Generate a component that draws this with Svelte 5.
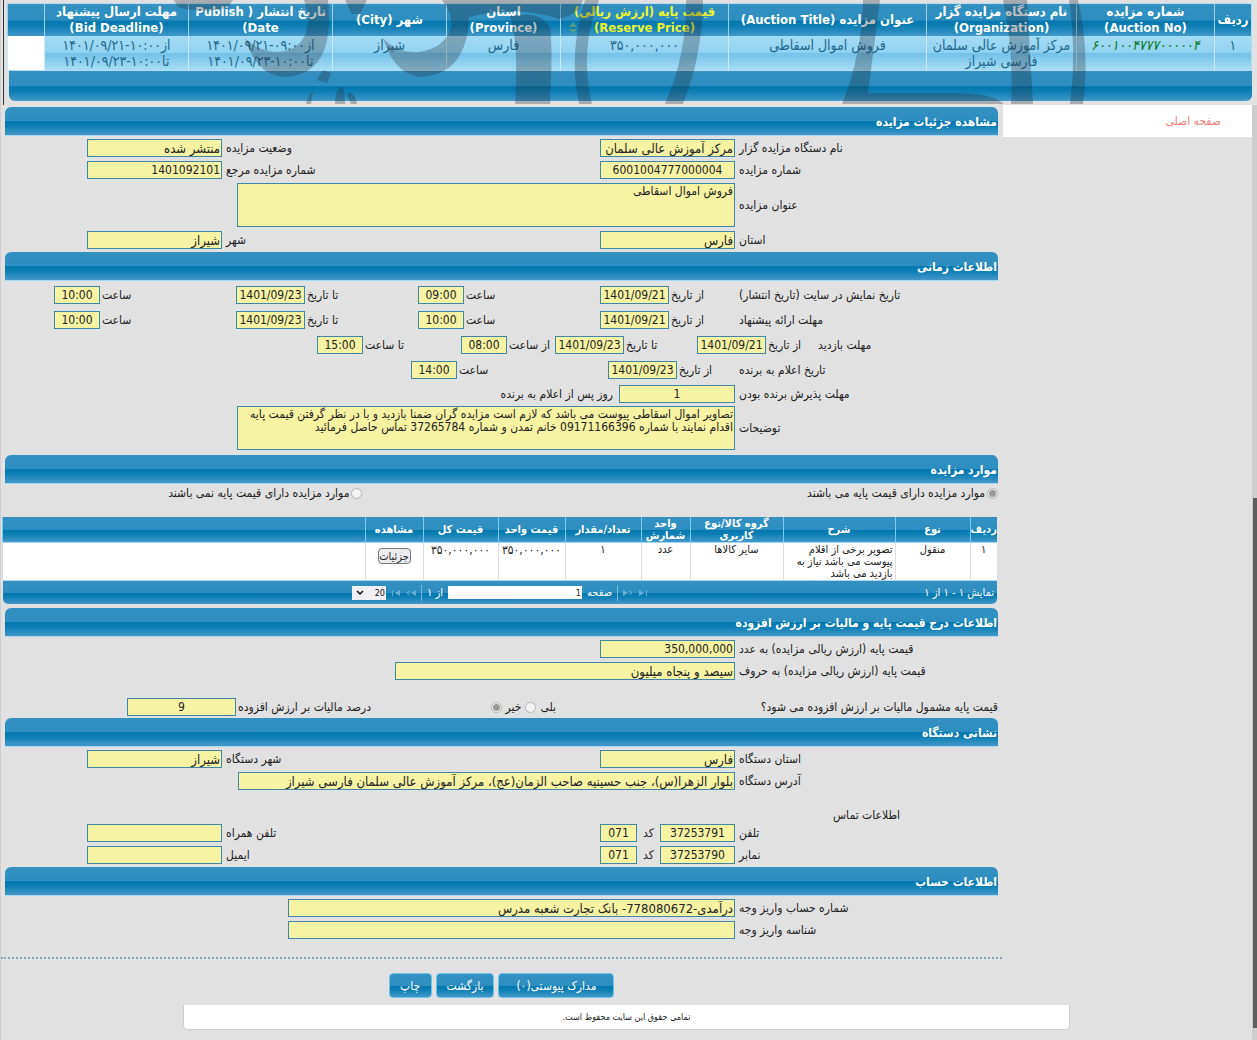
<script>
  const auctionColumns = [
    { lines: ['ردیف'], width: 37 },
    { lines: ['شماره مزایده', '(Auction No)'], width: 138 },
    { lines: ['نام دستگاه مزایده گزار', '(Organization)'], width: 150 },
    { lines: ['عنوان مزایده (Auction Title)'], width: 198 },
    { lines: ['قیمت پایه (ارزش ریالی)', '(Reserve Price)'], width: 168, sorted: true },
    { lines: ['استان', '(Province)'], width: 114 },
    { lines: ['شهر (City)'], width: 114 },
    { lines: ['تاریخ انتشار ( Publish Date)'], width: 144 },
    { lines: ['مهلت ارسال پیشنهاد', '(Bid Deadline)'], width: 144 },
    { lines: [''], width: 37 }
  ];
  const itemColumns = [
    ['ردیف', 27], ['نوع', 75], ['شرح', 112], ['گروه کالا/نوع کاربری', 93], ['واحد شمارش', 49],
    ['تعداد/مقدار', 76], ['قیمت واحد', 67], ['قیمت کل', 75], ['مشاهده', 58], ['', 0]
  ];
  const org = 'مرکز آموزش عالی سلمان فارسی شیراز';
  let title = $state('فروش اموال اسقاطی');
  let notes = $state('تصاویر اموال اسقاطی پیوست می باشد که لازم است مزایده گران ضمنا بازدید و با در نظر گرفتن قیمت پایه اقدام نمایند با شماره 09171166396 خانم تمدن و شماره 37265784 تماس حاصل فرمائید');
</script>

{#snippet field(id, label, value, size = 'mid', kind = '')}
  <label class="cap" for={id}>{label}</label>
  <input {id} class="box {size} {kind}" readonly {value} />
{/snippet}

{#snippet part(id, label, value, size = 'time')}
  <div class="part">
    <label for={id}>{label}</label>
    <input {id} class="box center {size}" readonly {value} />
  </div>
{/snippet}

<div class="page" dir="rtl" lang="fa">
  <header class="top">
    <table class="auction">
      <colgroup>
        {#each auctionColumns as c}<col style="width:{c.width}px" />{/each}
      </colgroup>
      <thead>
        <tr>
          {#each auctionColumns as c}
            <th class:sorted={c.sorted}>
              {#each c.lines as line}<div>{line}</div>{/each}
              {#if c.sorted}
                <svg class="sort" viewBox="0 0 10 12"><path d="M5 0 9 5H1zM5 12 1 7h8z" fill="#4f9c8c" /></svg>
              {/if}
            </th>
          {/each}
        </tr>
      </thead>
      <tbody>
        <tr>
          <td>۱</td>
          <td><a class="number" href="#auction">۶۰۰۱۰۰۴۷۷۷۰۰۰۰۰۴</a></td>
          <td>{org}</td>
          <td>فروش اموال اسقاطی</td>
          <td>۳۵۰,۰۰۰,۰۰۰</td>
          <td>فارس</td>
          <td>شیراز</td>
          <td>از۰۹:۰۰-۱۴۰۱/۰۹/۲۱<br />تا۱۰:۰۰-۱۴۰۱/۰۹/۲۳</td>
          <td>از۱۰:۰۰-۱۴۰۱/۰۹/۲۱<br />تا۱۰:۰۰-۱۴۰۱/۰۹/۲۳</td>
          <td class="blank"></td>
        </tr>
      </tbody>
    </table>
    <div class="topbar"></div>
    <svg class="mark" viewBox="0 0 1257 105" preserveAspectRatio="none" aria-hidden="true">
      <g fill="#20303c" fill-opacity="0.3">
        <path d="M174 0h59l-5 7q-24 8-50 0z" />
        <path d="M304 0h24q8 76-45 77-27-3-38-39 14 14 34 14 27-3 29-30 0-10-4-22z" />
        <path d="M345 0h22l-7 14h-8z" />
        <path d="M383 38q13 15 35 14 26-3 33-24 2-14-9-28h141l-4 9q-10 8-20 10-40-14-90-2-2 58-49 60-26-3-37-39z" />
        <path d="M510 16q32-6 40 12 3 20 0 76h-35q4-62-5-88z" />
        <path d="M585 0h14q-20 50-7 104h-13q-11-50 6-104z" />
        <path d="M686 0h17q-1 57-20 104h-18q22-50 21-104z" />
        <path d="M323 70l8 3-4 10-10-3z" />
        <path d="M306 104q1-8 7-12l-2 12zM335 104q1-22 9-15l1 15zM347 94q7-5 10 10h-6z" />
        <path d="M863 0h17l-12 93h82q44 0 54 11H842q20-50 21-104z" />
        <path d="M1003 0h24l6 104h-22q3-52-8-104z" />
        <path d="M1069 0h9q12 52 5 104h-13q7-52-1-104z" />
      </g>
    </svg>
  </header>

  <div class="body">
    <nav class="side"><a href="#home">صفحه اصلی</a></nav>

    <main>
      <h2>مشاهده جزئیات مزایده</h2>
      <section class="rows close">
        <div class="pair">
          {@render field('org', 'نام دستگاه مزایده گزار', org)}
          {@render field('state', 'وضعیت مزایده', 'منتشر شده')}
        </div>
        <div class="pair">
          {@render field('no', 'شماره مزایده', '6001004777000004', 'mid', 'center')}
          {@render field('ref', 'شماره مزایده مرجع', '1401092101', 'mid', 'num')}
        </div>
        <div class="line">
          <label class="cap" for="title">عنوان مزایده</label>
          <textarea id="title" class="box" readonly value={title}></textarea>
        </div>
        <div class="pair">
          {@render field('province', 'استان', 'فارس')}
          {@render field('city', 'شهر', 'شیراز')}
        </div>
      </section>

      <h2>اطلاعات زمانی</h2>
      <section class="rows dates">
        <div class="line four">
          <span class="cap">تاریخ نمایش در سایت (تاریخ انتشار)</span>
          {@render part('s1', 'از تاریخ', '1401/09/21', 'date')}
          {@render part('s2', 'ساعت', '09:00')}
          {@render part('s3', 'تا تاریخ', '1401/09/23', 'date')}
          {@render part('s4', 'ساعت', '10:00')}
        </div>
        <div class="line four">
          <span class="cap">مهلت ارائه پیشنهاد</span>
          {@render part('b1', 'از تاریخ', '1401/09/21', 'date')}
          {@render part('b2', 'ساعت', '10:00')}
          {@render part('b3', 'تا تاریخ', '1401/09/23', 'date')}
          {@render part('b4', 'ساعت', '10:00')}
        </div>
        <div class="line visit">
          <span class="cap">مهلت بازدید</span>
          {@render part('v1', 'از تاریخ', '1401/09/21', 'date')}
          {@render part('v2', 'تا تاریخ', '1401/09/23', 'date')}
          {@render part('v3', 'از ساعت', '08:00')}
          {@render part('v4', 'تا ساعت', '15:00')}
        </div>
        <div class="line winner">
          <span class="cap">تاریخ اعلام به برنده</span>
          {@render part('w1', 'از تاریخ', '1401/09/23', 'date')}
          {@render part('w2', 'ساعت', '14:00')}
        </div>
      </section>
      <section class="rows after">
        <div class="line">
          {@render field('accept', 'مهلت پذیرش برنده بودن', '1', 'days', 'center')}
          <span class="suffix">روز پس از اعلام به برنده</span>
        </div>
        <div class="line">
          <label class="cap" for="notes">توضیحات</label>
          <textarea id="notes" class="box" readonly value={notes}></textarea>
        </div>
      </section>

      <h2>موارد مزایده</h2>
      <div class="choice">
        <label><input type="radio" name="base" checked disabled />موارد مزایده دارای قیمت پایه می باشند</label>
        <label><input type="radio" name="base" disabled />موارد مزایده دارای قیمت پایه نمی باشند</label>
      </div>
      <div class="grid">
        <table class="items">
          <colgroup>
            {#each itemColumns as [, w]}<col style="width:{w ? w + 'px' : 'auto'}" />{/each}
          </colgroup>
          <thead>
            <tr>{#each itemColumns as [name]}<th>{name}</th>{/each}</tr>
          </thead>
          <tbody>
            <tr>
              <td>۱</td>
              <td>منقول</td>
              <td class="desc">تصویر برخی از اقلام پیوست می باشد نیاز به بازدید می باشد</td>
              <td>سایر کالاها</td>
              <td>عدد</td>
              <td>۱</td>
              <td class="money">۳۵۰,۰۰۰,۰۰۰</td>
              <td class="money">۳۵۰,۰۰۰,۰۰۰</td>
              <td><button class="detail">جزئیات</button></td>
              <td></td>
            </tr>
          </tbody>
        </table>
        <div class="pager">
          <span>نمایش ۱ - ۱ از ۱</span>
          <div class="pages">
            <button class="step" aria-label="صفحه اول"><svg viewBox="0 0 10 8"><path d="M1 1l5 3-5 3zM8 1h1v6H8z" /></svg></button>
            <button class="step" aria-label="صفحه قبل"><svg viewBox="0 0 10 8"><path d="M0 1l5 3-5 3z" /><path class="thin" d="M6 2l3 2-3 2" /></svg></button>
            <i></i>
            <label for="pg">صفحه</label>
            <input id="pg" value="1" />
            <span>از ۱</span>
            <i></i>
            <button class="step" aria-label="صفحه بعد"><svg viewBox="0 0 10 8"><path d="M10 1L5 4l5 3z" /><path class="thin" d="M4 2L1 4l3 2" /></svg></button>
            <button class="step" aria-label="صفحه آخر"><svg viewBox="0 0 10 8"><path d="M9 1L4 4l5 3zM1 1h1v6H1z" /></svg></button>
            <div class="size">
              <select aria-label="تعداد در صفحه"><option>20</option></select>
              <svg viewBox="0 0 8 6"><path d="M1 1l3 3 3-3" /></svg>
            </div>
          </div>
        </div>
      </div>

      <h2>اطلاعات درج قیمت پایه و مالیات بر ارزش افزوده</h2>
      <section class="rows close">
        <div class="line">{@render field('price', 'قیمت پایه (ارزش ریالی مزایده) به عدد', '350,000,000', 'mid', 'num')}</div>
        <div class="line">{@render field('words', 'قیمت پایه (ارزش ریالی مزایده) به حروف', 'سیصد و پنجاه میلیون', 'wide')}</div>
      </section>
      <div class="tax">
        <span class="question">قیمت پایه مشمول مالیات بر ارزش افزوده می شود؟</span>
        <span class="answers">
          <label for="yes">بلی</label><input id="yes" type="radio" name="tax" disabled />
          <label for="no-tax">خیر</label><input id="no-tax" type="radio" name="tax" checked disabled />
        </span>
        <label class="percent" for="vat">درصد مالیات بر ارزش افزوده</label>
        <input id="vat" class="box vat center" readonly value="9" />
      </div>

      <h2>نشانی دستگاه</h2>
      <section class="rows close">
        <div class="pair">
          {@render field('oprov', 'استان دستگاه', 'فارس')}
          {@render field('ocity', 'شهر دستگاه', 'شیراز')}
        </div>
        <div class="line">{@render field('addr', 'آدرس دستگاه', 'بلوار الزهرا(س)، جنب حسینیه صاحب الزمان(عج)، مرکز آموزش عالی سلمان فارسی شیراز', 'full')}</div>
      </section>
      <h3>اطلاعات تماس</h3>
      <section class="rows contact">
        <div class="pair">
          <label class="cap" for="tel">تلفن</label>
          <div class="phone">
            <input id="tel" class="box center tel" readonly value="37253791" />
            <label for="telc">کد</label>
            <input id="telc" class="box center code" readonly value="071" />
          </div>
          {@render field('mobile', 'تلفن همراه', '')}
        </div>
        <div class="pair">
          <label class="cap" for="fax">نمابر</label>
          <div class="phone">
            <input id="fax" class="box center tel" readonly value="37253790" />
            <label for="faxc">کد</label>
            <input id="faxc" class="box center code" readonly value="071" />
          </div>
          {@render field('mail', 'ایمیل', '')}
        </div>
      </section>

      <h2>اطلاعات حساب</h2>
      <section class="rows close">
        <div class="line">{@render field('acc', 'شماره حساب واریز وجه', 'درآمدی-778080672- بانک تجارت شعبه مدرس', 'account')}</div>
        <div class="line">{@render field('accid', 'شناسه واریز وجه', '', 'account')}</div>
      </section>
      <hr />
      <div class="actions">
        <button>مدارک پیوستی(۰)</button>
        <button>بازگشت</button>
        <button>چاپ</button>
      </div>
    </main>
  </div>
  <footer>تمامی حقوق این سایت محفوظ است.</footer>
  <div class="scroll" aria-hidden="true"><div></div></div>
</div>

<style>
  :global(body) { background: #e1e1e1; }
  .page {
    --bar: linear-gradient(#3490c1 0, #2c8fbf 50%, #0277ad 52%, #0f80b4 70%, #4498c9 100%);
    position: relative;
    min-height: 1040px;
    box-sizing: border-box;
    padding: 0 5px 0 0;
    border-left: 1px solid #cfcfcf;
    background: #e1e1e1;
    color: #222;
    font: 12px/14px "DejaVu Sans Condensed", "DejaVu Sans", sans-serif;
  }
  input, textarea, button, select { font: inherit; color: inherit; margin: 0; box-sizing: border-box; }
  a { text-decoration: none; }

  .top { padding: 3px 0 3px 5px; height: 99px; margin-left: 2px; border-left: 1px solid #333; position: relative; }
  .auction { width: 100%; border-collapse: collapse; table-layout: fixed; border: 1px solid #b5dcef; }
  .auction th {
    position: relative; height: 32px; padding: 0 2px; color: #fff; background: var(--bar);
    font-size: 13px; line-height: 16px; border-left: 1px solid #9ad3ee;
  }
  .auction th.sorted { color: #ecf531; }
  .sort { position: absolute; left: 7px; bottom: 2px; width: 10px; height: 12px; }
  .auction td {
    height: 33px; padding: 1px 2px 0; vertical-align: top; text-align: center; color: #1d678c;
    font-size: 14px; line-height: 16px; border-left: 1px solid #c9ebfa;
    background: linear-gradient(#a4dbf5 0, #92d2f1 48%, #74c1e8 52%, #a6dcf5 100%);
  }
  .auction td.blank { background: #fff; }
  .number { color: #0b7a22; font-style: italic; }
  .topbar { height: 30px; background: var(--bar); border-radius: 0 0 6px 6px; }
  .mark { position: absolute; left: -4px; right: -5px; top: 0; width: calc(100% + 9px); height: 105px; pointer-events: none; }

  .body { display: grid; grid-template-columns: 249px 1fr; }
  .side { height: 32px; background: #fff; display: flex; align-items: center; padding-right: 31px; align-self: start; }
  .side a { color: #ef7f7f; }
  main { padding: 2px 5px 0 4px; min-width: 0; }
  h2 {
    margin: 0; height: 28px; padding: 0 1px; color: #fff; background: var(--bar);
    border-bottom: 1px solid #a5d8f6; border-radius: 6px 6px 0 0; font-size: 12px; line-height: 30px;
  }
  .rows { display: flex; flex-direction: column; }
  .close { gap: 4px; padding: 3px 0; }
  .dates { gap: 7px; padding: 5px 0 6px; }
  .after { gap: 3px; padding-bottom: 5px; }
  .line { display: flex; align-items: center; }
  .pair { display: grid; grid-template-columns: 259px 139px 1fr 139px; padding-left: 82px; align-items: center; }
  .cap { text-align: left; white-space: nowrap; }
  .line > .cap { width: 259px; flex: none; }
  .box {
    height: 18px; padding: 0 1px; border: 1px solid #3f87a6; border-radius: 0; background: #f6f4a4;
    color: #222; font-size: 13px; outline: 0; margin-right: 4px; flex: none;
  }
  .box.center { text-align: center; font-size: 12px; }
  .box.num { font-size: 12px; }
  .mid { width: 135px; }
  .wide { width: 340px; }
  .full { width: 497px; }
  .account { width: 447px; }
  .days { width: 116px; }
  .vat { width: 109px; }
  textarea.box { width: 498px; height: 44px; resize: none; overflow: hidden; font-size: 12px; line-height: 13px; padding: 1px; }
  .part { display: flex; justify-content: flex-end; align-items: center; white-space: nowrap; }
  .part .box { margin-right: 2px; padding: 0; }
  .date { width: 69px; }
  .time { width: 46px; }
  .four { padding-left: 49px; }
  .four .part { flex: 1; }
  .four .part:nth-child(2) { flex: 0 0 139px; }
  .visit .cap { width: 180px; }
  .visit .part { width: 121px; }
  .visit .part:nth-child(3) { width: 142px; }
  .visit .part:nth-child(4) { width: 94px; }
  .visit .part:nth-child(5) { width: 144px; }
  .winner .part { width: 131px; }
  .winner .part:last-child { width: 197px; }
  .suffix { margin-right: 6px; }

  input[type='radio'] {
    appearance: none; width: 11px; height: 11px; border: 1px solid #b6b6b6; border-radius: 50%;
    background: #f3f3f3; flex: none;
  }
  input[type='radio']:checked { background: radial-gradient(circle, #9a9a9a 0 3px, #ececec 4px); }
  .choice { display: flex; height: 32px; align-items: flex-start; box-sizing: content-box; padding-top: 1px; }
  .choice label { display: flex; gap: 2px; align-items: center; width: 64%; line-height: 16px; }
  .choice label + label { width: auto; }

  .grid { margin: 0 1px 4px -3px; }
  .items { width: 100%; table-layout: fixed; border-collapse: collapse; font-size: 11px; line-height: 12px; }
  .items th {
    height: 25px; padding: 0; color: #fff; background: var(--bar);
    border-left: 1px solid #79cdf3; border-bottom: 1px solid #a5d8f6; font-size: 11px; line-height: 12px;
  }
  .items td { height: 36px; padding: 1px 0 0; background: #fff; border-left: 1px solid #ddd; text-align: center; vertical-align: top; }
  .items td.desc { text-align: right; padding: 1px 2px 0; }
  .items td.money { font-size: 12px; }
  .detail {
    height: 16px; width: 33px; margin-top: 4px; padding: 0; border: 1px solid #777; border-radius: 4px;
    background: #ececf0; font-size: 11px; line-height: 13px;
  }
  .pager {
    display: grid; grid-template-columns: 1fr auto 1fr; align-items: center; height: 24px; margin-left: 1px; padding: 0 3px;
    border-top: 1px solid #a5d8f6; border-radius: 0 0 5px 5px; background: var(--bar); color: #fff; font-size: 11px;
    box-sizing: border-box;
  }
  .pages { display: flex; align-items: center; gap: 5px; }
  .pages i { width: 1px; height: 16px; background: #79b8d8; }
  .pages input { width: 134px; height: 13px; padding: 0 1px; border: 0; color: #222; font-size: 9px; background: #fff; }
  .step { width: 10px; height: 12px; padding: 0; border: 0; background: none; display: flex; align-items: center; }
  .step svg { width: 10px; height: 8px; fill: #69b0d6; }
  .step .thin { fill: none; stroke: #69b0d6; }
  .size { position: relative; display: flex; }
  .size select { appearance: none; width: 34px; height: 14px; padding: 0 1px; border: 0; border-radius: 0; background: #f0f0f4; color: #111; font-size: 9px; }
  .size svg { position: absolute; left: 4px; top: 4px; width: 8px; height: 6px; fill: none; stroke: #111; stroke-width: 1.5; }

  .tax { display: flex; align-items: center; margin-top: 15px; padding: 0 0 2px 122px; }
  .question { width: 442px; white-space: nowrap; flex: none; }
  .answers { display: flex; align-items: center; gap: 4px; }
  .percent { margin-right: auto; }
  .tax .vat { margin-right: 2px; }
  h3 { margin: 15px 98px 2px 0; font-weight: normal; font-size: 12px; line-height: 14px; }
  .contact { gap: 4px; padding-bottom: 3px; }
  .phone { display: flex; align-items: center; justify-content: space-between; }
  .phone .code { margin-right: 0; }
  .tel { width: 75px; }
  .code { width: 37px; }
  hr { margin: 15px -4px 0 -4px; border: 0; border-top: 2px dotted #7fa9bb; }
  .actions { display: flex; justify-content: center; gap: 4px; padding: 14px 0 7px; }
  .actions button {
    height: 25px; min-width: 43px; padding: 0 10px; border: 1px solid #6cc3ea; border-radius: 4px;
    background: var(--bar); color: #fff;
  }
  .actions button:first-child { min-width: 116px; }
  footer {
    margin: 0 182px; height: 24px; background: #fff; border: 1px solid #ccc; border-top: 0; border-radius: 0 0 5px 5px;
    text-align: center; font-size: 9px; line-height: 24px;
  }
  .scroll { position: absolute; right: 0; top: 105px; bottom: 0; width: 5px; background: #cdcdcd; }
  .scroll div { position: absolute; right: 0; left: 1px; top: 42%; bottom: 12px; background: #5f5f5f; }
</style>
